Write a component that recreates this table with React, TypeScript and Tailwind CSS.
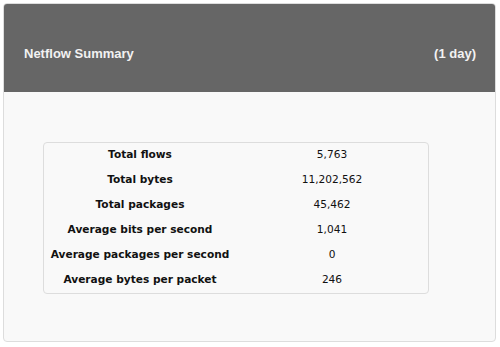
import React from "react";

const rows = [
  { label: "Total flows", value: "5,763" },
  { label: "Total bytes", value: "11,202,562" },
  { label: "Total packages", value: "45,462" },
  { label: "Average bits per second", value: "1,041" },
  { label: "Average packages per second", value: "0" },
  { label: "Average bytes per packet", value: "246" },
];

const App: React.FC = () => {
  return (
    <div className="w-[500px] h-[347px] bg-white pt-[3px] pl-[3px]">
      <div className="w-[493px] h-[339px] border border-[#dddddd] rounded-[4px] bg-[#f9f9f9] overflow-hidden flex flex-col">
        {/* Header */}
        <div className="h-[88px] bg-[#666666] flex items-center justify-between pt-[12px] pl-[20px] pr-[19px] text-[13px] font-bold text-[#f2f2f2] font-['Liberation_Sans',Arial,sans-serif]">
          <span>Netflow Summary</span>
          <span>(1 day)</span>
        </div>

        {/* Body */}
        <div className="pt-[50px] pl-[39px]">
          <div className="w-[386px] border border-[#dddddd] rounded-[4px] font-['DejaVu_Sans',Verdana,sans-serif] text-[10.6px] text-[#111111]">
            {rows.map((row) => (
              <div key={row.label} className="grid grid-cols-2 h-[25px] pb-[2px] items-center">
                <div className="text-center font-bold">{row.label}</div>
                <div className="text-center">{row.value}</div>
              </div>
            ))}
          </div>
        </div>
      </div>
    </div>
  );
};

export default App;
